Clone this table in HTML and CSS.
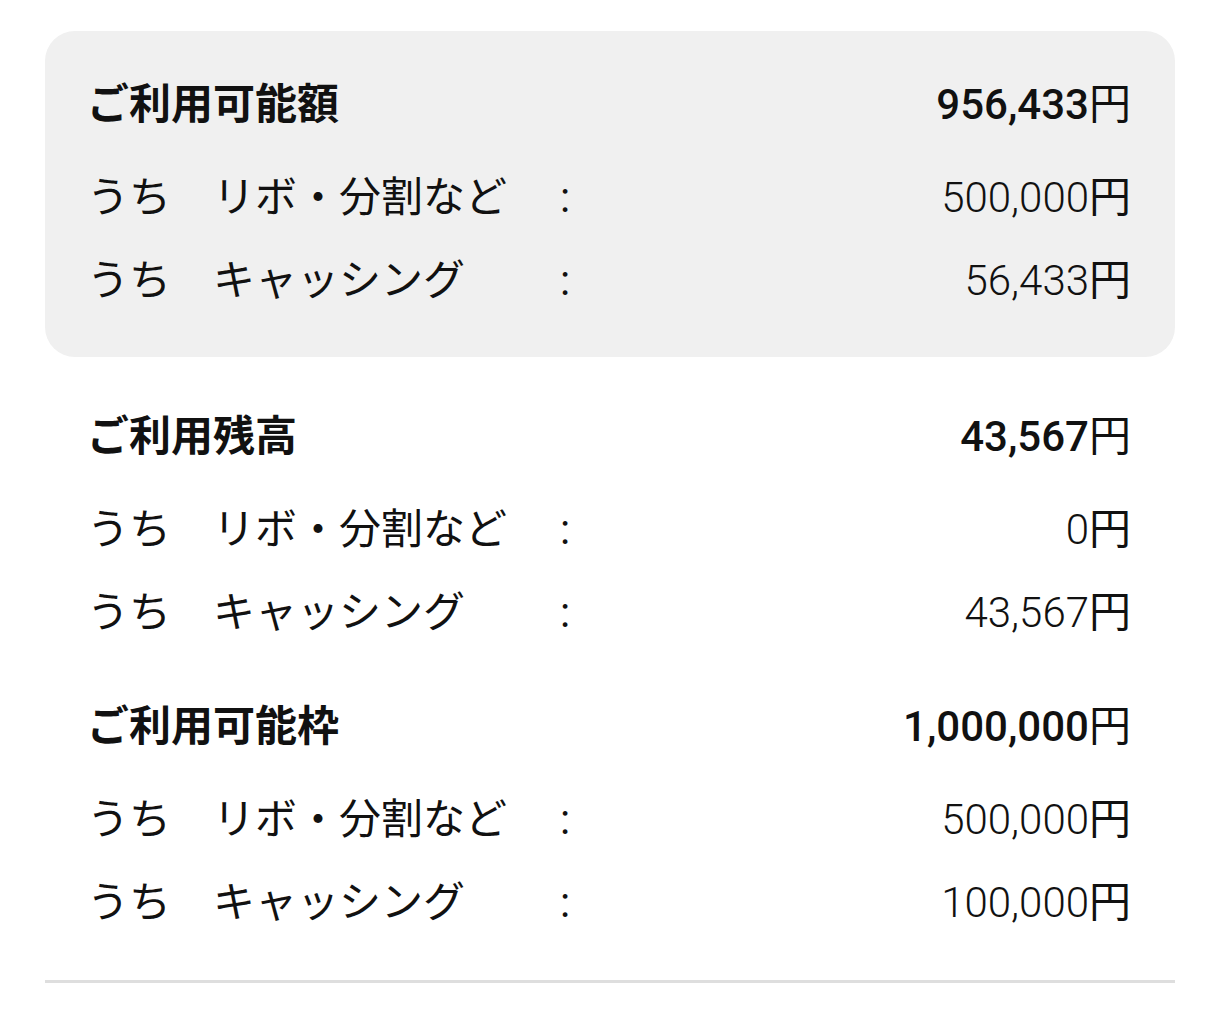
FILE: index.html
```html
<!DOCTYPE html>
<html lang="ja">
<head>
<meta charset="utf-8">
<link rel="stylesheet" href="styles.css">
</head>
<body>
<div class="wrap">
  <section class="sec card">
    <div class="row title"><span class="label">ご利用可能額</span><span class="val">956,433<span class="yen">円</span></span></div>
    <div class="row sub"><span class="label">うち　リボ・分割など</span><span class="colon">:</span><span class="val">500,000<span class="yen">円</span></span></div>
    <div class="row sub"><span class="label">うち　キャッシング</span><span class="colon">:</span><span class="val">56,433<span class="yen">円</span></span></div>
  </section>
  <section class="sec plain s2">
    <div class="row title"><span class="label">ご利用残高</span><span class="val">43,567<span class="yen">円</span></span></div>
    <div class="row sub"><span class="label">うち　リボ・分割など</span><span class="colon">:</span><span class="val">0<span class="yen">円</span></span></div>
    <div class="row sub"><span class="label">うち　キャッシング</span><span class="colon">:</span><span class="val">43,567<span class="yen">円</span></span></div>
  </section>
  <section class="sec plain s3">
    <div class="row title"><span class="label">ご利用可能枠</span><span class="val">1,000,000<span class="yen">円</span></span></div>
    <div class="row sub"><span class="label">うち　リボ・分割など</span><span class="colon">:</span><span class="val">500,000<span class="yen">円</span></span></div>
    <div class="row sub"><span class="label">うち　キャッシング</span><span class="colon">:</span><span class="val">100,000<span class="yen">円</span></span></div>
  </section>
  <div class="divider"></div>
</div>
</body>
</html>
```

FILE: styles.css
```css
html, body {
  margin: 0;
  padding: 0;
  background: #ffffff;
}
body {
  font-family: Roboto, "Noto Sans CJK JP", sans-serif;
  color: #111111;
  font-size: 42px;
}
.wrap {
  width: 1130px;
  margin: 31px 0 0 45px;
}
.sec {
  padding: 0 44px 0 42px;
  display: flex;
  flex-direction: column;
}
.card {
  background: #f0f0f0;
  border-radius: 30px;
  padding-top: 44px;
  padding-bottom: 46px;
}
.s2 {
  padding-top: 50px;
}
.s3 {
  padding-top: 54px;
}
.row {
  display: grid;
  grid-template-columns: 473px 40px 1fr;
  align-items: center;
  height: 60px;
  line-height: 60px;
  white-space: nowrap;
}
.row.title {
  font-weight: 700;
  margin-bottom: 33px;
}
.row.title .label {
  grid-column: 1 / 3;
}
.row.title .val {
  font-weight: 500;
}
.row.sub .val {
  font-weight: 300;
}
.val .yen {
  font-weight: 400;
}
.row.sub + .row.sub {
  margin-top: 23px;
}
.val {
  grid-column: 3;
  text-align: right;
}
.colon {
  font-family: Roboto, sans-serif;
}
.divider {
  margin-top: 47px;
  height: 3px;
  background: #dedede;
}
```
